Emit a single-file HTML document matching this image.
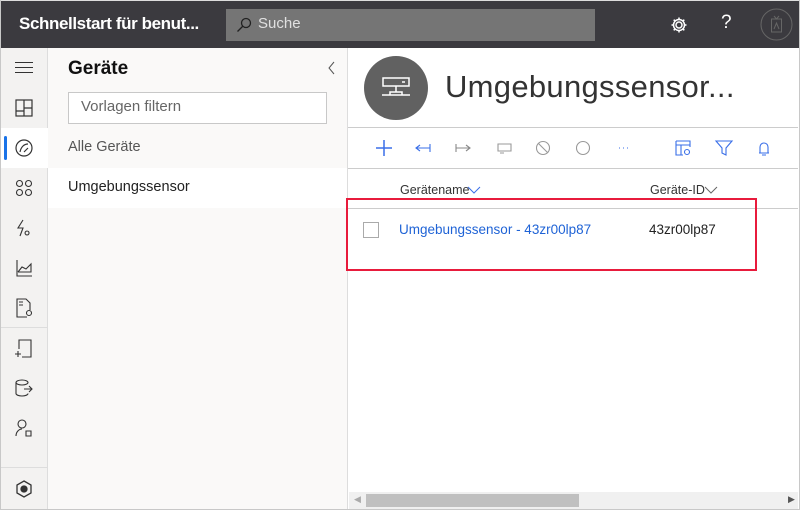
<!DOCTYPE html>
<html><head><meta charset="utf-8"><style>
*{box-sizing:border-box;margin:0;padding:0}
body{width:800px;height:510px;overflow:hidden;font-family:"Segoe UI","Liberation Sans",sans-serif;background:#fff;position:relative}
.frame{position:absolute;left:0;top:0;width:800px;height:510px;border:1px solid #c8c8c8;border-top:none}
.top{position:absolute;left:0;top:0;width:800px;height:48px;background:#3b3a3f;border-top:1px solid #ddd}
.title{position:absolute;left:19px;top:13px;color:#fff;font-size:17px;font-weight:bold;letter-spacing:-0.4px}
.search{position:absolute;left:226px;top:8px;width:369px;height:32px;background:#757575;color:#e0e0e0;font-size:15px;padding:6px 0 0 32px}
.nav{position:absolute;left:1px;top:48px;width:47px;height:461px;background:#f3f2f1;border-right:1px solid #ddd}
.panel{position:absolute;left:48px;top:48px;width:300px;height:461px;background:#faf9f8;border-right:1px solid #ddd}
.ic{position:absolute;left:14px}
.t{position:absolute;white-space:nowrap}
</style></head><body>
<div class="top">
<div class="title">Schnellstart für benut...</div>
<div class="search"><svg style="position:absolute;left:10px;top:8px" width="16" height="16" viewBox="0 0 16 16" fill="none" stroke="#222" stroke-width="1.3"><circle cx="10" cy="6" r="4.5"/><path d="M7 9L1.5 14.5"/></svg>Suche</div>
<svg style="position:absolute;left:670px;top:15px" width="18" height="18" viewBox="0 0 18 18" fill="none" stroke="#fff" stroke-width="1.5"><circle cx="9" cy="9" r="3"/><path d="M9 1.5v2.5M9 14v2.5M1.5 9h2.5M14 9h2.5M3.7 3.7l1.8 1.8M12.5 12.5l1.8 1.8M3.7 14.3l1.8-1.8M12.5 5.5l1.8-1.8"/><circle cx="9" cy="9" r="5.5"/></svg>
<div class="t" style="left:721px;top:11px;color:#fff;font-size:19px">?</div>
<svg style="position:absolute;left:760px;top:7px" width="33" height="33" viewBox="0 0 33 33" fill="none" stroke="#666" stroke-width="1"><circle cx="16.5" cy="16.5" r="15.5"/><rect x="11.5" y="11" width="10" height="13"/><path d="M14 8l2.5 3 2.5-3M14 21l2.5-6 2.5 6"/></svg>
</div>
<div class="nav">
<svg class="ic" style="top:13px" width="18" height="12" stroke="#333" stroke-width="1"><path d="M0 1.5h18M0 6.5h18M0 11.5h18"/></svg>
<svg class="ic" style="top:51px" width="18" height="18" fill="none" stroke="#333" stroke-width="1.2"><rect x="1" y="1" width="16" height="16"/><path d="M9 1v16M9 9h8M1 12h8"/></svg>
<div style="position:absolute;left:0;top:80px;width:47px;height:40px;background:#fff"></div>
<div style="position:absolute;left:3px;top:88px;width:3px;height:24px;background:#1a73e8;border-radius:2px"></div>
<svg class="ic" style="top:91px" width="18" height="18" fill="none" stroke="#333" stroke-width="1.2"><circle cx="9" cy="9" r="8"/><path d="M5 13C6 8 9 5 13 5M9 13l4-4"/></svg>
<svg class="ic" style="top:131px" width="18" height="18" fill="none" stroke="#333" stroke-width="1.1"><circle cx="4.5" cy="4.5" r="3"/><circle cx="13.5" cy="4.5" r="3"/><circle cx="4.5" cy="13.5" r="3"/><circle cx="13.5" cy="13.5" r="3"/></svg>
<svg class="ic" style="top:171px" width="18" height="18" fill="none" stroke="#333" stroke-width="1.1"><path d="M8 1L3 9h5l-3 8M12 12a2 2 0 1 0 .1 0"/></svg>
<svg class="ic" style="top:211px" width="18" height="18" fill="none" stroke="#333" stroke-width="1.1"><path d="M2 1v16h15M3 13l4-5 4 2 5-5v8H3"/></svg>
<svg class="ic" style="top:250px" width="18" height="20" fill="none" stroke="#333" stroke-width="1.1"><path d="M12 19H2V1h9l4 4v7"/><circle cx="14" cy="15" r="2.5"/><path d="M4 4h4M4 7h4"/></svg>
<div style="position:absolute;left:0;top:279px;width:47px;border-top:1px solid #ddd"></div>
<svg class="ic" style="top:291px" width="18" height="20" fill="none" stroke="#333" stroke-width="1.1"><path d="M4 10V1h12v17H7M0 15h6M3 12v6"/></svg>
<svg class="ic" style="top:331px" width="18" height="18" fill="none" stroke="#333" stroke-width="1.1"><ellipse cx="7" cy="3.5" rx="6" ry="2.5"/><path d="M1 3.5v11c0 1.5 3 2.5 6 2.5s6-1 6-2.5M9 10h8M14 7l3 3-3 3"/></svg>
<svg class="ic" style="top:371px" width="18" height="18" fill="none" stroke="#333" stroke-width="1.1"><circle cx="7" cy="5" r="4"/><path d="M1 17c0-4 3-7 6-7M11 12h5v5h-5z"/></svg>
<div style="position:absolute;left:0;top:419px;width:47px;border-top:1px solid #ddd"></div>
<svg class="ic" style="top:432px" width="18" height="18" fill="none" stroke="#333" stroke-width="1.3"><path d="M9 1l7 4v8l-7 4-7-4V5z"/><circle cx="9" cy="9" r="3" fill="#333"/></svg>
</div>
<div class="panel">
<div class="t" style="left:20px;top:10px;font-size:19px;font-weight:bold;color:#111">Geräte</div>
<svg style="position:absolute;left:280px;top:13px" width="8" height="14" fill="none" stroke="#555" stroke-width="1"><path d="M6 1L1 7l5 6"/></svg>
<div style="position:absolute;left:20px;top:44px;width:259px;height:32px;background:#fff;border:1px solid #c8c8c8;padding:5px 0 0 12px;font-size:15px;color:#666">Vorlagen filtern</div>
<div class="t" style="left:20px;top:91px;font-size:14.5px;color:#555">Alle Geräte</div>
<div style="position:absolute;left:0;top:120px;width:299px;height:40px;background:#fff"></div>
<div class="t" style="left:20px;top:131px;font-size:14.5px;color:#222">Umgebungssensor</div>
</div>
<svg style="position:absolute;left:364px;top:56px" width="64" height="64"><circle cx="32" cy="32" r="32" fill="#616161"/><g fill="none" stroke="#fff" stroke-width="1.5"><rect x="19" y="22" width="26" height="8"/><path d="M38 26h3M32 30v6M26 36h12v3H26zM18 39h28"/></g></svg>
<div class="t" style="left:445px;top:69px;font-size:31px;color:#333;letter-spacing:0.3px">Umgebungssensor...</div>
<div style="position:absolute;left:348px;top:127px;width:450px;border-top:1px solid #ccc"></div>
<div style="position:absolute;left:348px;top:168px;width:450px;border-top:1px solid #ccc"></div>
<svg style="position:absolute;left:374px;top:138px" width="400" height="20" fill="none" stroke-width="1.1">
<path d="M2 10h16M10 2v16" stroke="#3a6fe8" stroke-width="1.5"/>
<path d="M42 10h14M46 7l-4 3 4 3M56 6v8" stroke="#3a6fe8"/>
<path d="M82 6v8M82 10h14M92 7l4 3-4 3" stroke="#888"/>
<path d="M124 6h13v7h-13zM126 15h4" stroke="#999"/>
<circle cx="169" cy="10" r="6.5" stroke="#999"/><path d="M164.5 5.5l9 9" stroke="#999"/>
<circle cx="209" cy="10" r="6.5" stroke="#999"/>
<path d="M245 10h1M249 10h1M253 10h1" stroke="#3a6fe8"/>
<path d="M302 3h14v6M302 3v14h7M302 7h14M307 7v10" stroke="#3a6fe8"/><circle cx="313" cy="14" r="2.5" stroke="#3a6fe8"/>
<path d="M342 3h16l-6 7v7l-4-2v-5z" stroke="#3a6fe8"/>
<path d="M386 15V9a4 4 0 0 1 8 0v6h1H385M388 17h4" stroke="#3a6fe8"/>
</svg>
<div class="t" style="left:400px;top:183px;font-size:12.5px;color:#333">Gerätename</div>
<svg style="position:absolute;left:467px;top:186px" width="14" height="8" fill="none" stroke="#3a6fe8"><path d="M1 1l6 6 6-6"/></svg>
<div class="t" style="left:650px;top:183px;font-size:12.5px;color:#333">Geräte-ID</div>
<svg style="position:absolute;left:704px;top:186px" width="14" height="8" fill="none" stroke="#666"><path d="M1 1l6 6 6-6"/></svg>
<div style="position:absolute;left:348px;top:208px;width:450px;border-top:1px solid #ccc"></div>
<div style="position:absolute;left:346px;top:198px;width:411px;height:73px;border:2px solid #e81b3c"></div>
<div style="position:absolute;left:363px;top:222px;width:16px;height:16px;border:1px solid #aaa"></div>
<div class="t" style="left:399px;top:222px;font-size:13.5px;color:#1f63d6">Umgebungssensor - 43zr00lp87</div>
<div class="t" style="left:649px;top:222px;font-size:13.5px;color:#222">43zr00lp87</div>
<div style="position:absolute;left:349px;top:492px;width:449px;height:17px;background:#f0f0f0"></div>
<div style="position:absolute;left:366px;top:494px;width:213px;height:13px;background:#c0c0c0"></div>
<div class="t" style="left:354px;top:494px;font-size:9px;color:#aaa">◀</div>
<div class="t" style="left:788px;top:494px;font-size:9px;color:#555">▶</div>
<div class="frame"></div>
</body></html>
